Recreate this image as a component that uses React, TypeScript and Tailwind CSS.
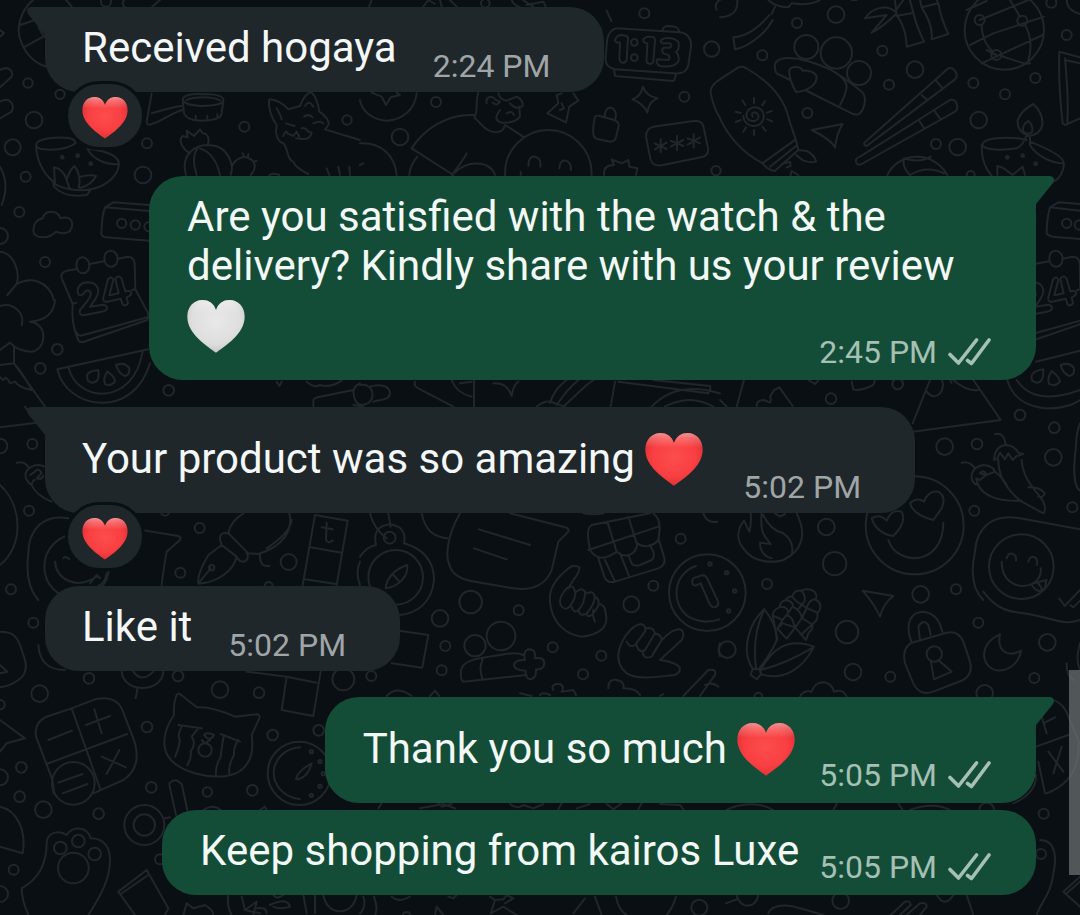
import type { ReactNode } from "react";

type Region = {
  x: number;
  y: number;
  dots: [number, number, number][];
  lines: string[];
};

const CALENDAR = [
  "M78 88L50 92Q30 98 35 115L68 192M118 72L162 64M204 56L232 50Q252 50 254 70L256 148L292 215Q298 228 292 240L100 306Q88 310 83 296C68 260 65 225 68 192L80 188M246 150L256 148M78 275Q85 290 98 286L292 232",
  "M98 52C110 52 118 65 118 77C118 90 110 100 100 100C88 100 80 90 79 77C79 62 86 52 98 52M182 32C195 32 203 45 203 57C203 70 195 80 185 80C172 80 164 70 163 57C163 42 170 32 182 32",
  "M84 160C78 140 95 128 112 127C135 127 148 140 144 160C140 175 128 190 120 200L160 194Q174 196 170 208Q165 214 155 215L100 226Q86 224 90 210C102 195 118 180 122 165C124 150 108 146 102 160Q90 172 84 160",
  "M174 118Q186 106 190 120L178 166L206 160L196 116Q204 104 214 114L226 154Q244 150 244 160Q242 168 230 172L234 190Q228 200 218 194L212 176L168 186Q158 184 160 172Z",
];

/* Doodles of the chat wallpaper, drawn at three times their displayed size. */
const REGIONS: Region[] = [
  { x: 50, y: 240, dots: [], lines: CALENDAR },
  { x: 995, y: 240, dots: [], lines: CALENDAR },
  {
    x: 640,
    y: 540,
    dots: [[202, 158, 115], [210, 72, 5], [260, 98, 5], [284, 153, 5], [266, 213, 5]],
    lines: [
      "M168 78C100 100 90 190 145 230Q190 255 238 238M157 128Q154 114 168 112L185 106Q196 104 201 114L234 184Q238 198 224 202Q214 202 208 190L182 130L168 136Q158 138 157 128",
      "M373 208C330 245 300 330 338 386M373 208Q412 255 410 300Q402 325 358 386M373 208C345 265 340 325 348 384M338 386L358 388L364 402L350 418L332 404ZM362 390C395 330 440 290 522 320C490 385 430 425 362 402M360 390Q430 375 520 322",
      "M412 300L398 226Q400 208 418 202Q420 184 438 180Q444 168 456 170Q464 148 484 152Q508 142 524 156Q534 170 526 178Q546 188 540 208Q536 216 532 218Q536 240 518 252Q518 270 506 278L498 300M418 202C440 195 450 215 440 225L428 240L398 226M428 240L440 225Q458 232 460 248L466 262M438 180Q462 185 458 200L440 225M458 200Q480 210 486 234L514 252M456 170L472 186L500 204L532 218M484 152Q498 165 494 184L472 210M526 178Q508 178 500 204L486 234L466 262L440 296M428 240L412 266L440 296M412 266L428 250L466 262L496 298M486 234L466 262M518 252L486 282",
    ],
  },
  {
    x: 0,
    y: 0,
    dots: [
      [84, 249, 14], [180, 283, 14], [102, 360, 25], [38, 442, 24], [77, 530, 15], [58, 636, 15],
      [0, 708, 24], [135, 786, 15], [733, 380, 15], [441, 430, 15], [429, 525, 25], [1041, 360, 14],
      [318, 5, 15], [187, 472, 4], [233, 467, 4], [272, 491, 4], [365, 670, 14], [406, 675, 14], [447, 680, 14],
    ],
    lines: [
      "M105 -5C60 30 45 90 65 130C80 165 105 190 140 200M60 75L105 60M75 140L130 110M110 60C115 80 120 95 133 110M190 -10L215 20M380 -10Q360 10 375 22M480 0L455 22",
      "M0 210C25 195 45 215 33 232L0 262M0 305C28 290 45 310 35 335L0 355M0 90L12 100L0 110",
      "M108 435C108 415 170 410 205 414Q228 418 226 430C200 450 150 452 120 446Q108 442 108 435C110 480 130 520 160 545L162 560C190 590 230 590 262 584L272 568C320 560 355 525 357 492C355 465 320 455 262 445C275 475 320 498 357 492M162 502L165 552M162 502C180 505 195 520 200 540C205 520 215 505 223 498C238 515 242 545 236 562M200 540C205 555 205 562 212 568M240 530Q270 522 288 528Q275 555 240 564M165 552C190 568 240 575 272 568",
      "M455 280L440 365Q440 378 455 372C485 365 520 335 548 330M455 340C490 330 520 320 545 318",
      "M548 300C548 285 575 280 612 283C650 280 672 290 670 302C665 322 560 325 548 300L552 340Q560 360 600 362Q655 362 664 345L670 302M560 300C580 290 640 288 660 302M587 347V355M622 347V355M652 343V351",
      "M558 525C540 460 590 430 635 436C680 440 705 490 692 525M590 525C575 480 585 455 592 445M660 525C650 480 630 455 600 445M570 460C545 445 535 420 548 408L563 412L560 392L582 408L600 388L608 400C625 400 630 420 622 436M695 500C705 475 735 465 745 475C765 480 772 505 752 525M728 460L733 470M745 462L744 472M762 485L770 483",
      "M850 430C830 425 825 395 830 375C808 345 805 310 808 298C830 300 850 310 865 328L900 318C910 290 925 275 935 278C950 290 955 315 958 335C975 345 990 365 985 375L975 388L1080 420M830 325C838 335 842 350 845 358M915 318C920 310 928 300 940 320M850 408Q858 385 862 400L880 408L890 395L898 410M858 370L884 378M912 350Q925 340 938 352M940 370Q960 360 970 370M905 385C915 380 925 395 925 395L935 398Q930 420 905 417L888 415M850 430C865 445 860 480 880 485L885 495Q900 510 925 522M1015 500L1020 525M980 505L988 525M1048 500L1050 525M808 525Q822 518 838 525",
      "M130 712Q100 712 100 690Q102 660 128 655C135 630 170 628 182 655C210 645 222 665 214 685C208 705 180 700 168 695Q150 712 130 712",
      "M448 615L340 607L315 622C305 650 305 680 304 700Q305 710 318 712L448 722M315 622L448 633M0 500Q30 550 5 615M0 755C45 760 60 820 50 852L22 885M50 852C90 830 145 840 162 900",
    ],
  },
  {
    x: 360,
    y: 0,
    dots: [
      [853, 40, 15], [1055, 147, 23], [973, 290, 15], [228, 306, 15], [120, 411, 25], [1068, 512, 14],
      [376, 10, 13], [823, 127, 10], [823, 173, 10], [565, 520, 130],
    ],
    lines: [
      "M770 85L960 97C985 100 995 120 993 140L985 195C980 220 955 222 940 220L765 208C740 200 735 190 737 170L742 115Q750 88 770 85M762 210L765 228L940 243Q945 240 948 222M908 90Q910 78 925 78L945 80Q958 85 957 97",
      "M765 120Q770 105 785 105L800 108Q807 115 803 125L800 180Q795 190 785 188Q778 185 778 175L780 128Q765 128 765 120M850 118Q860 108 870 110Q885 110 885 120L880 185Q875 195 865 190Q858 188 860 175L862 130Q848 128 850 118M905 118Q935 108 955 125Q960 150 948 155Q960 170 955 185Q940 205 900 198Q885 190 892 178L925 180Q932 172 925 165L910 160Q902 150 912 143L930 143Q938 135 930 130L908 130Q898 125 905 118",
      "M740 32L754 63M849 260Q855 285 892 295Q865 305 862 338Q850 310 817 298Q842 290 849 260M705 350Q698 380 700 400Q700 415 715 418L750 425Q765 425 768 412L776 378Q778 365 762 360L720 348Q708 345 705 350M735 352C730 320 765 310 768 345L765 362",
      "M880 380L1005 362Q1025 362 1030 378L1043 440Q1048 465 1030 470L905 496Q880 500 872 480L858 410Q858 385 880 380M902 418V457M884 430L920 447M920 428L884 448M951 408V450M932 422L970 438M970 420L932 440M1001 402V442M983 415L1020 430M1020 412L983 434",
      "M1080 238Q1050 255 1052 280Q1060 320 1080 355M505 498Q505 468 525 470Q545 475 541 500M598 505Q600 478 618 482Q636 490 632 510M482 515V525M170 280C165 330 125 360 80 362C40 360 5 335 0 300M35 278L65 290L78 315L92 292L120 285L110 278",
      "M355 278C345 310 355 335 343 352L370 380C400 405 430 400 435 375L475 400L492 412M380 310C375 290 395 285 405 298L420 305Q410 320 398 308M415 280Q420 300 440 302L470 290Q490 300 488 318Q470 332 450 310M420 330C405 350 405 362 425 368Q465 370 480 350L478 320M440 340Q455 330 462 345M605 280L590 285L595 310L562 340L618 367L628 320L655 302L640 280M605 310L612 325L600 330",
      "M343 345C260 340 190 390 155 445L280 525M172 470Q150 495 148 525M320 460Q310 480 275 525M285 518C320 480 390 480 405 525M0 430C60 425 105 465 110 525M0 495L10 490M732 525C730 500 745 495 762 495L755 478L785 490L805 480L808 500L832 505L828 525M25 25L35 0M190 20L205 0L225 12M240 0L245 20M270 0L290 20M455 0Q460 15 480 22M490 0Q505 12 520 20M500 15L550 5L558 22M1080 0Q1062 10 1070 30",
    ],
  },
  {
    x: 720,
    y: 0,
    dots: [
      [348, 44, 25], [231, 69, 15], [127, 166, 15], [259, 141, 36], [349, 159, 47], [417, 219, 36], [487, 152, 15],
      [585, 209, 25], [507, 254, 15], [262, 339, 15], [760, 249, 15], [855, 283, 15], [946, 234, 15], [776, 360, 25],
      [648, 432, 15], [713, 441, 25], [1040, 105, 15], [994, 8, 15], [853, 90, 119], [779, 60, 15], [907, 62, 15],
      [829, 165, 15], [862, 472, 4], [908, 467, 4], [947, 491, 4], [1040, 670, 14], [1078, 675, 14], [752, 525, 12],
    ],
    lines: [
      "M0 52Q55 50 52 0M145 0Q165 20 205 22L215 10Q270 18 300 0M165 20L155 42M158 60C140 95 90 140 45 148L40 112C80 110 120 80 148 45",
      "M435 55C455 25 500 10 525 35L550 0M435 55L500 45L455 98C480 85 510 60 528 42M525 0L530 45M530 48L580 38L570 0M530 45C555 80 560 110 560 140L612 125C595 90 585 60 580 38M600 0L605 22L655 10L650 0M605 22C630 60 638 90 635 118L685 102C670 70 660 40 655 10M395 0L410 0",
      "M165 205C160 185 180 172 205 174C250 175 290 190 330 208C370 230 400 255 425 275C445 295 430 335 415 343Q405 345 395 340L255 270M165 205Q165 222 180 225L210 240M208 210C215 195 245 200 247 212C260 210 285 215 290 230C290 255 265 272 228 276C218 258 205 235 208 210M330 208Q380 235 380 262Q375 290 360 315",
      "M275 390L368 372Q350 400 345 443Q335 420 275 390M433 428L685 205Q700 200 710 222Q712 230 705 238L440 438Q430 435 433 428M648 242L665 262M605 285L622 300M408 485Q405 475 420 470L690 300Q710 295 712 322Q712 330 705 335L425 492Q410 498 408 485M598 362L612 385M645 335L662 358",
      "M0 238L55 202Q65 198 78 204C140 240 190 290 205 350C215 390 225 400 235 450L165 512Q150 515 125 488C70 460 25 410 0 355M130 488L222 422M150 500L232 435M235 450L260 453Q285 465 288 485Q275 490 250 482L228 465M195 490L210 485L212 498L200 502M212 525L215 513L235 525",
      "M98 350C90 340 105 330 115 345C120 365 90 370 80 352C75 325 105 315 122 328C140 345 130 375 105 378C85 380 70 365 70 348M102 293V310M68 302L76 315M135 303L127 316M47 335L62 339M155 333L141 338M48 366L62 360M157 364L142 358M70 395L78 382M102 405V390M137 392L127 380",
      "M800 3L740 30M779 60L975 -20M750 135L820 100L972 50M785 190L968 105M785 75C785 110 800 140 820 155M800 150L829 165M845 168C880 180 915 195 930 190M915 75C935 110 935 150 925 180M870 0L900 50M1040 0Q1040 30 1080 42",
      "M1018 155L1080 172M1018 155C1015 230 1020 300 1028 370L1035 375L1080 355M1035 175C1040 230 1045 320 1042 365M1035 180L1080 190",
      "M940 312Q970 340 967 375Q960 405 925 408Q890 395 893 360Q905 330 940 312M925 363Q942 378 935 398Q920 405 910 395Q905 375 925 363M920 405Q910 435 890 445C850 452 790 450 787 435C788 412 850 412 895 415L920 420M930 408L930 435C950 470 1000 490 1030 490C1035 470 980 445 930 425M785 435C783 480 800 510 815 528M1032 490Q1030 530 1000 545M832 498V525M832 498C850 500 865 515 877 525L908 500L915 525",
      "M1080 612L1015 607L990 622C982 650 980 680 980 700Q985 708 998 710L1080 717M990 622L1080 632M502 525C535 455 640 450 682 525M552 475Q545 500 570 525M552 475Q600 490 632 470M570 525Q620 495 672 520",
    ],
  },
  {
    x: 0,
    y: 300,
    dots: [
      [172, 148, 16], [121, 205, 16], [506, 271, 16], [97, 432, 15], [0, 438, 22], [87, 632, 15], [33, 868, 15],
      [599, 684, 15], [541, 818, 15], [866, 786, 24], [230, 800, 97], [635, 803, 8], [806, 858, 12], [495, 635, 12],
    ],
    lines: [
      "M0 18C40 5 75 40 65 75M165 0Q160 60 90 65C145 70 140 150 95 155C65 155 45 145 30 128L0 150M42 140L42 190L135 320M0 195L42 190C60 210 80 240 95 270Q60 265 45 245L30 250Q20 225 10 240L0 232M0 382L110 368L75 320",
      "M172 208L445 148M172 208C200 330 400 360 450 190M205 200C230 310 400 320 428 155M262 235Q255 215 295 210Q300 250 275 248Q262 245 262 235M322 215Q308 235 315 252Q330 262 345 245Q345 230 322 215M348 195Q375 185 388 205Q390 225 375 228Q355 220 348 195",
      "M940 320V300Q945 292 960 290L1060 270M1080 250Q1055 260 1062 290Q1068 312 1080 312M1060 315L1080 318M920 245Q940 265 960 255Q990 265 1025 242M830 245L838 258L845 245",
      "M50 488Q75 482 88 505M135 500C100 485 70 510 78 535C85 550 95 555 95 555C105 580 140 600 155 605M90 525L105 515Q115 500 125 520L110 535Q125 540 130 528M95 555Q98 540 105 540M0 555C70 620 70 740 0 795",
      "M115 900C80 860 80 800 85 760C85 690 130 640 205 655M425 690L535 708Q545 712 540 720L500 755Q490 810 485 855M165 785C170 840 230 870 290 830M190 775Q195 765 208 778M320 820Q315 850 295 858M270 850L290 825L300 835",
      "M595 850Q590 825 625 765L665 735L710 770C700 815 650 845 605 850Q598 852 595 850L632 805M660 715Q660 695 685 700L740 755Q750 780 730 785Q718 785 710 770L665 735Q660 725 660 715M685 700Q690 665 730 640M740 760L775 762C850 740 880 690 868 640M780 762C780 795 790 800 808 798M875 660Q870 700 800 745",
      "M945 645L1043 662L1010 855M945 645L908 855M932 742L1025 758M915 838L1008 852M980 668L978 720Q985 732 998 722M965 682L998 688M1080 785Q1065 820 1080 855",
    ],
  },
  {
    x: 360,
    y: 370,
    dots: [
      [89, 503, 18], [962, 506, 15], [880, 647, 15], [814, 703, 24], [332, 696, 34], [240, 745, 25], [476, 721, 15],
      [578, 832, 15], [724, 857, 15], [669, 913, 15], [256, 828, 15], [245, 901, 15], [345, 827, 32], [423, 798, 43],
      [34, 918, 15], [107, 622, 82],
    ],
    lines: [
      "M0 560Q20 530 48 525Q35 470 89 463Q142 470 132 520C200 540 222 580 222 630C215 700 170 730 120 735M77 655C80 620 110 595 142 585C145 620 115 650 77 655M98 612L118 635M30 430Q40 475 80 505M85 430L92 470M185 430C195 480 220 500 262 505",
      "M300 430C260 500 255 560 270 590C280 620 310 630 345 635L460 655C520 665 560 640 575 600L595 515L625 485Q628 475 615 472L450 430M357 478L510 525M342 535L440 568",
      "M0 110L10 108M30 50C60 40 90 48 90 70C88 92 60 88 40 95M0 45Q35 40 38 75Q35 105 0 105M165 35Q160 48 175 55L280 110M275 30Q290 70 335 80M300 40L335 35M342 30V110M400 40Q440 35 455 78Q460 45 475 35M570 100Q580 60 620 30M590 105Q620 60 655 30M610 110L680 45L700 30M530 110Q560 85 585 100L615 110M752 110L765 35M775 35L1045 70M880 30L1050 48Q1055 65 1040 68M875 110Q950 30 1080 70M915 110Q990 70 1060 110",
      "M695 465L870 430M695 465Q680 475 685 510L690 540C710 570 735 570 770 545C800 570 830 550 832 520C860 540 900 520 897 495Q905 450 880 430M685 540L895 470M742 455L770 545M805 440L830 520M715 565L735 625Q745 640 765 635L895 595Q920 585 912 560L895 505M735 570L765 635M780 550L808 620M805 555L815 580Q820 590 840 585L875 570Q885 560 880 545L870 525",
      "M570 695C565 650 595 620 620 600Q640 580 658 592Q660 605 640 630L625 655M570 695C575 760 620 795 665 800C720 795 745 770 738 735Q735 700 715 702M620 655Q590 690 605 710Q620 725 632 705Q650 680 645 665Q640 640 620 655M650 665Q665 650 675 665Q675 700 655 720Q640 732 635 710M680 670Q700 660 705 680Q700 710 680 730Q660 742 655 720M705 680Q720 690 715 705Q705 730 690 738Q680 740 680 730M700 720L698 735L705 755",
      "M310 935Q300 930 303 900C310 870 350 865 420 855Q470 845 490 855M368 868Q355 895 368 928M310 935L500 915M495 870Q488 840 508 838Q528 838 525 865Q552 860 553 880Q552 900 528 898Q530 925 512 928Q495 925 497 902Q462 900 462 885Q465 868 495 870",
      "M795 800C770 840 765 880 800 910C840 935 920 915 945 915Q965 905 958 890Q940 875 900 870L965 810Q975 790 965 780Q945 770 905 810L880 850M795 800Q820 765 842 762Q860 765 855 785L825 825Q810 835 800 815M860 775Q880 770 885 790L855 840Q835 850 830 825M885 790Q905 795 905 810L875 860Q850 870 848 845",
      "M118 782L205 795L187 893L95 880M80 978Q110 945 155 978M210 978L225 962L238 978M480 970L515 978M580 960Q570 940 600 942Q615 950 605 965L640 960L648 975M745 955Q745 925 770 930Q795 935 790 955Q830 955 840 975M970 978L1045 900Q1070 895 1065 915L1020 978M1035 945Q1060 935 1075 950M1080 820Q1072 840 1080 858M540 975Q550 965 570 975M900 978L910 972M670 430Q700 435 730 430M1030 430Q1040 460 1072 455",
    ],
  },
  {
    x: 720,
    y: 300,
    dots: [
      [333, 296, 16], [533, 252, 16], [900, 345, 16], [1003, 383, 16], [674, 440, 25], [771, 432, 16], [1000, 472, 25],
      [763, 632, 15], [1057, 622, 15], [319, 681, 25], [344, 791, 35], [141, 852, 15], [602, 883, 25], [708, 868, 15],
      [584, 676, 147], [904, 800, 97],
    ],
    lines: [
      "M50 320L72 240M0 300L20 320M110 318Q110 300 132 300L150 308Q155 300 150 290L162 270L178 262L218 318M265 240L285 252L295 242M395 245L400 268Q420 275 460 255L465 240M630 240L578 370M578 395L842 360L760 240M620 275Q640 300 660 280Q675 260 665 240M700 240Q740 275 775 270M690 240L695 248",
      "M948 185L1080 152M862 240C890 340 1020 340 1080 300M890 240C930 300 1000 300 1080 270M935 235Q930 215 970 208Q972 248 950 248Q935 245 935 235M995 213Q980 235 988 252Q1005 262 1020 245Q1018 230 995 213M1022 195Q1050 185 1062 205Q1064 225 1048 228Q1028 220 1022 195",
      "M825 402Q852 395 857 435M822 480Q825 435 862 435Q885 440 895 458L910 462L890 468L878 480L865 460L855 478L840 458L832 475ZM835 480C835 530 860 570 905 605L970 640Q980 630 970 605C950 570 910 545 905 480M725 488Q750 482 765 505M755 525Q760 500 790 495Q820 498 825 515L800 525Q790 505 780 520L798 525L780 540L768 535L775 555Q752 550 755 525M775 555C790 590 840 605 905 602M825 515Q850 535 860 555M925 562Q960 560 974 580Q970 595 955 590",
      "M1080 370Q1068 400 1068 440C1060 500 1060 560 1080 572",
      "M455 655Q480 640 500 662Q515 625 545 635Q562 665 520 708Q470 700 455 655M570 610Q590 590 612 605Q625 570 655 575Q680 590 665 625L640 660Q580 645 570 610M505 720C530 800 670 800 670 668",
      "M92 640Q95 670 88 695L72 662C50 690 50 720 70 745C100 790 160 790 190 780C250 750 260 700 230 640M125 640Q120 690 135 710L152 732L120 728Q120 765 155 775M130 645Q150 690 190 700Q225 725 215 765M165 640L180 650L195 642",
      "M790 900C750 860 755 800 765 755C770 680 820 640 900 655L1080 688M860 775Q865 755 880 762Q890 768 888 782M925 785Q930 765 945 772Q955 780 950 795M845 785C845 850 900 870 940 850Q965 835 962 805M940 850L980 840M935 855Q955 885 975 865L978 845M955 850L965 865",
    ],
  },
  {
    x: 0,
    y: 580,
    dots: [
      [100, 128, 15], [119, 341, 25], [267, 295, 16], [534, 288, 16], [660, 329, 25], [777, 338, 16], [1030, 298, 33],
      [441, 441, 16], [818, 465, 16], [956, 451, 16], [64, 562, 16], [0, 592, 24], [59, 650, 16], [130, 689, 25],
      [296, 701, 16], [454, 622, 16], [622, 636, 14], [757, 631, 16], [433, 735, 60], [433, 735, 32], [220, 610, 64],
      [181, 804, 19], [235, 783, 19], [284, 822, 19], [220, 864, 46], [41, 869, 15], [0, 942, 24], [615, 510, 20],
      [898, 580, 95], [934, 515, 5], [960, 545, 5], [970, 581, 5], [960, 619, 5], [934, 646, 5], [480, 838, 15], [0, 374, 14],
    ],
    lines: [
      "M0 155C40 155 50 170 60 195L75 240Q85 280 55 300Q30 318 0 322M0 255L22 275L0 280M0 420L75 475L20 490L0 515",
      "M115 195Q120 270 195 270M365 275C370 340 485 340 490 275M400 275Q425 310 460 275M412 328L407 355M740 275L860 290L845 390L940 408L962 275M860 290L950 308",
      "M215 385L155 405Q100 420 108 470L150 580Q165 620 160 640M215 385L285 358Q345 345 365 385L400 475Q430 560 370 600L280 640M215 385L300 625M140 552L382 462M145 480L216 452M258 435L330 408M283 388L305 460M305 530L378 562M358 510L320 582M175 608L248 582M188 640L262 612",
      "M530 345Q520 370 522 405C490 450 485 500 505 530C540 580 630 595 680 588C740 580 765 530 755 465L778 415Q782 403 768 403L705 410C660 390 620 380 590 382L540 342Q532 340 530 345M535 435L605 445M545 440Q530 470 540 480Q535 510 525 530M595 445L575 470Q590 490 572 515Q575 535 562 555M662 462L720 485M672 465Q665 500 662 530Q645 560 648 585M715 480Q700 500 702 525Q685 555 688 580M612 465Q620 455 642 465Q635 480 622 475ZM605 480L615 490L630 480",
      "M900 502C800 510 790 640 900 658M888 598Q890 575 935 550Q925 590 895 598ZM508 610Q525 590 545 612L562 690M508 615L528 705M495 715L510 712M0 680C50 690 80 750 68 820L0 800M780 690L795 680L800 690M610 690Q640 670 662 690",
      "M85 1005Q65 960 65 925C110 900 140 860 140 790C140 755 180 750 200 765C215 740 260 735 272 775C310 775 330 800 330 840C330 900 300 950 265 1005M355 935L440 870M440 870L505 985L495 1005M355 935L405 1005M362 942L445 885M550 1005L560 970L580 985L615 975Q640 990 640 1005M685 945Q680 980 695 1005M725 950L735 990L770 965L760 1005M735 990L780 1000M770 985Q800 980 800 1000M810 975Q860 950 870 980Q840 990 820 980M910 945L920 1000M945 945V1000M970 945C980 1010 1060 1010 1070 945M820 945Q830 960 850 945",
    ],
  },
  {
    x: 720,
    y: 580,
    dots: [
      [381, 156, 34], [22, 209, 25], [399, 276, 25], [511, 290, 15], [775, 128, 15], [982, 187, 25], [943, 294, 15],
      [794, 340, 25], [971, 701, 15], [115, 350, 12], [800, 690, 22], [963, 822, 15], [362, 962, 25],
      [643, 222, 23],
    ],
    lines: [
      "M575 188C550 120 580 95 610 95C650 100 660 130 667 155M600 180L595 140Q610 115 625 135L632 165M575 188L680 158Q715 150 730 185L750 245Q760 280 730 300L640 335Q600 350 580 310L555 250Q545 205 575 188M632 242L642 298L695 275L655 240",
      "M840 163C830 210 860 235 903 212C895 260 850 280 820 268C780 250 780 190 840 163M428 32L520 48Q490 70 480 110Q465 75 428 32M240 350Q250 330 275 335C285 300 330 295 342 335Q370 325 380 350M790 35C830 90 870 95 910 100C990 110 1030 140 1080 120M1080 190Q1065 240 1080 270M1040 250Q1040 290 1060 300M1018 55L1034 78L1080 30M1052 76L1060 82L1080 62",
      "M1005 362Q1035 375 1045 410L1075 480Q1085 600 980 640M948 500L1045 465M965 410L980 460M970 430L1005 412M955 545L975 640M985 515L1030 575M1025 500L1000 580M948 585Q950 640 880 670M20 690C60 670 120 665 160 690M340 690L350 672M535 670L548 690M570 690Q640 665 690 690",
      "M960 780C1010 780 1010 840 1000 880C995 940 960 970 950 1005M740 945L760 1005M650 945Q675 985 700 945M1080 890L1030 935L1080 980M1040 940L1080 905M50 945C60 990 110 985 115 945M18 970L50 958M145 1000C155 975 200 970 240 985L310 1005M512 1005L555 965Q570 960 572 975L540 1005M560 1005L600 970Q620 965 620 980L600 1005",
    ],
  },
  {
    x: 360,
    y: 680,
    dots: [[1018, 683, 24], [140, 708, 12]],
    lines: [
      "M55 385L65 370M180 385L250 372L285 385M235 370L245 380L275 372M450 372Q470 390 490 375L520 385L550 372M595 388L605 370M650 385L690 372M740 372L760 388L785 370M835 388L845 370M900 372L960 375L970 388",
      "M10 650Q20 680 0 700M42 650Q55 690 45 705M95 650Q115 670 150 650M225 705L230 680L250 705M265 650L280 655L290 645M390 650L405 660L392 700L430 680L470 705M405 660L430 658L440 645L460 655L435 670M640 700L675 655M705 650L725 705M768 650Q775 690 800 705M948 650Q940 680 920 705",
    ],
  },
];

function Wallpaper() {
  return (
    <svg className="absolute inset-0 h-full w-full" aria-hidden="true">
      <defs>
        <radialGradient id="heart-red" cx="0.5" cy="0.45" r="0.62">
          <stop offset="0" stopColor="#fc4d4d" />
          <stop offset="0.6" stopColor="#f93f41" />
          <stop offset="1" stopColor="#d92d31" />
        </radialGradient>
        <radialGradient id="heart-white" cx="0.5" cy="0.4" r="0.65">
          <stop offset="0" stopColor="#e9e9e9" />
          <stop offset="0.65" stopColor="#dedede" />
          <stop offset="1" stopColor="#c2c2c2" />
        </radialGradient>
        <linearGradient id="heart-shine" x1="0" y1="0" x2="0" y2="1">
          <stop offset="0" stopColor="#ffffff" stopOpacity="0.45" />
          <stop offset="0.1" stopColor="#ffffff" stopOpacity="0.25" />
          <stop offset="0.28" stopColor="#ffffff" stopOpacity="0" />
        </linearGradient>
      </defs>
      <g fill="none" stroke="#20262a" strokeWidth="6" strokeLinecap="round" strokeLinejoin="round">
        {REGIONS.map((region) => (
          <g key={`${region.x}-${region.y}`} transform={`translate(${region.x} ${region.y}) scale(0.33333)`}>
            {region.lines.map((d) => (
              <path key={d} d={d} />
            ))}
            {region.dots.map(([cx, cy, r]) => (
              <circle key={`${cx}-${cy}-${r}`} cx={cx} cy={cy} r={r} />
            ))}
          </g>
        ))}
      </g>
    </svg>
  );
}

const HEART =
  "M86 158C60 138 0 102 0 50C0 20 20 0 45 0C65 0 79 10 86 30C93 10 107 0 127 0C152 0 172 20 172 50C172 102 112 138 86 158Z";

function HeartShape({ color }: { color: "red" | "white" }) {
  return (
    <>
      <path d={HEART} fill={color === "red" ? "url(#heart-red)" : "url(#heart-white)"} />
      <path d={HEART} fill="url(#heart-shine)" />
    </>
  );
}

function Heart({ color }: { color: "red" | "white" }) {
  return (
    <svg
      role="img"
      aria-label={`${color} heart`}
      className="mr-1 inline-block h-[70px] w-[58px] align-[-20px]"
      viewBox="-1 -30 174 210"
    >
      <HeartShape color={color} />
    </svg>
  );
}

function Ticks() {
  return (
    <svg className="h-[30px] w-[44px]" viewBox="0 0 44 30" fill="none" aria-label="Delivered" role="img">
      <path
        d="M3 17.5L11.5 26L29.5 3M20.5 23.5L24.5 26.5L42 3"
        stroke="#a5c0b5"
        strokeWidth="3.6"
        strokeLinecap="round"
        strokeLinejoin="round"
      />
    </svg>
  );
}

function Tail({ side }: { side: "left" | "right" }) {
  return side === "left" ? (
    <svg className="absolute top-0 -left-[18px] h-[32px] w-[52px]" viewBox="0 0 52 32" aria-hidden="true">
      <path d="M52 0H4Q-2 1 1 7L18 28V32H52Z" fill="#1f272a" />
    </svg>
  ) : (
    <svg className="absolute top-0 -right-[18px] h-[32px] w-[52px]" viewBox="0 0 52 32" aria-hidden="true">
      <path d="M0 0H48Q54 1 51 7L34 28V32H0Z" fill="#144d37" />
    </svg>
  );
}

function Received({ time, tail, children }: { time: string; tail?: boolean; children: ReactNode }) {
  return (
    <div className="relative flex w-fit items-end gap-9 rounded-[34px] bg-[#1f272a] pt-4 pr-[54px] pl-[37px]">
      {tail && <Tail side="left" />}
      <p className="relative pb-5 text-[42px] leading-[49px] text-[#f4f7f8]">{children}</p>
      <time className="relative pb-2 text-[32px] leading-[36px] whitespace-nowrap text-[#a0a5a8]">{time}</time>
    </div>
  );
}

function Sent({ time, tail, wide, children }: { time: string; tail?: boolean; wide?: boolean; children: ReactNode }) {
  return (
    <div
      className={
        wide
          ? "relative grid w-fit max-w-[887px] self-end rounded-[34px] bg-[#144d37] pt-4 pr-[45px] pl-[38px]"
          : "relative flex w-fit items-end gap-5 self-end rounded-[34px] bg-[#144d37] pt-4 pr-[45px] pl-[38px]"
      }
    >
      {tail && <Tail side="right" />}
      <p className="relative col-start-1 row-start-1 pb-5 text-[42px] leading-[49px] text-[#f2f8f5]">{children}</p>
      <div className="relative col-start-1 row-start-1 flex items-center gap-2.5 self-end justify-self-end pb-2.5 text-[#a5c0b5]">
        <time className="text-[32px] leading-[36px] whitespace-nowrap">{time}</time>
        <Ticks />
      </div>
    </div>
  );
}

function Reaction() {
  return (
    <button
      type="button"
      aria-label="Red heart reaction"
      className="relative -mt-[11px] ml-5 flex h-[69px] w-20 items-center justify-center rounded-full border-[3px] border-[#0a0f13] bg-[#1f272a] pt-1"
    >
      <svg className="h-[42px] w-[46px]" viewBox="-1 0 174 160" aria-hidden="true">
        <HeartShape color="red" />
      </svg>
    </button>
  );
}

export default function App() {
  return (
    <main className="relative min-h-screen overflow-hidden bg-[#0a0f13] font-[Roboto,'Noto_Sans',sans-serif]">
      <Wallpaper />
      <section aria-label="Conversation" className="relative flex flex-col pt-[7px] pr-11 pb-5 pl-[45px]">
        <Received time="2:24 PM" tail>
          Received hogaya
        </Received>
        <Reaction />
        <div className="mt-[26px] flex flex-col">
          <Sent time="2:45 PM" tail wide>
            Are you satisfied with the watch &amp; the delivery? Kindly share with us your review{" "}
            <Heart color="white" />
          </Sent>
        </div>
        <div className="mt-[27px]">
          <Received time="5:02 PM" tail>
            Your product was so amazing <Heart color="red" />
          </Received>
          <Reaction />
        </div>
        <div className="mt-[15px]">
          <Received time="5:02 PM">Like it</Received>
        </div>
        <div className="mt-[26px] flex flex-col gap-[7px]">
          <Sent time="5:05 PM" tail>
            Thank you so much <Heart color="red" />
          </Sent>
          <Sent time="5:05 PM">Keep shopping from kairos Luxe</Sent>
        </div>
      </section>
      <div className="absolute top-[670px] right-0 h-[205px] w-[11px] bg-[#6f7578]/70" />
    </main>
  );
}
